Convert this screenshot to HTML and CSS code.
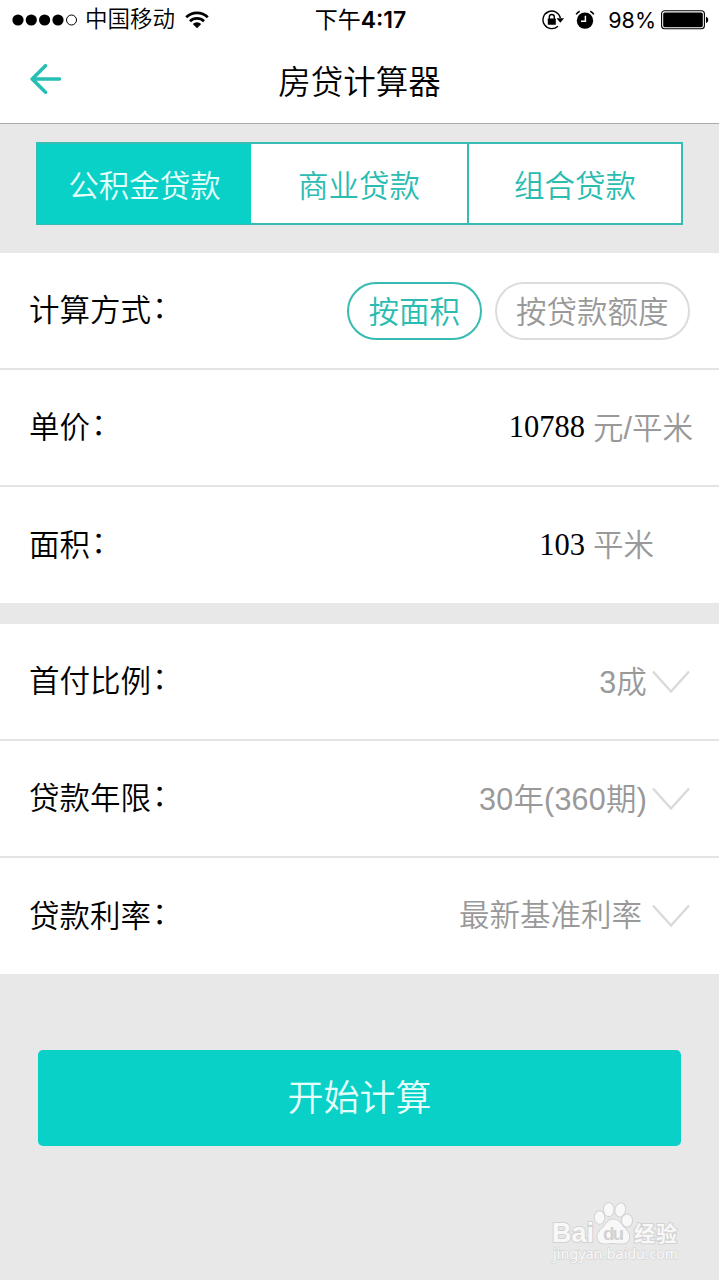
FILE: index.html
```html
<!DOCTYPE html>
<html lang="zh-CN">
<head>
  <meta charset="UTF-8">
  <title>房贷计算器</title>
  <meta name="viewport" content="width=device-width, initial-scale=1.0">
  <link rel="stylesheet" href="styles.css">
</head>
<body>
  <div class="status-bar">
    <div class="status-left">
      <svg class="signal" width="66" height="12" viewBox="0 0 66 12">
        <circle cx="6" cy="6" r="5.6"/>
        <circle cx="19.3" cy="6" r="5.6"/>
        <circle cx="32.6" cy="6" r="5.6"/>
        <circle cx="46" cy="6" r="5.6"/>
        <circle cx="59.5" cy="6" r="5" fill="none" stroke="#000" stroke-width="1"/>
      </svg>
      <span class="carrier">中国移动</span>
      <svg class="wifi" width="24" height="18" viewBox="0 0 24 18">
        <path d="M1.2 6.2a15.4 15.4 0 0 1 21.6 0M5 10.2a10 10 0 0 1 14 0" fill="none" stroke="#000" stroke-width="2.7"/>
        <path d="M7.8 13a6 6 0 0 1 8.4 0L12 17.2z"/>
      </svg>
    </div>
    <div class="status-time">下午<b>4:17</b></div>
    <div class="status-right">
      <svg class="lock" width="24" height="20" viewBox="0 0 24 20">
        <path d="M15.9 16.2A8.8 8.8 0 1 1 18.4 8" fill="none" stroke="#000" stroke-width="1.4"/>
        <path d="M14.5 8.2h7.6l-3.8 4.6z"/>
        <rect x="5.8" y="8.6" width="8" height="6.2" rx=".6"/>
        <path d="M7.3 9V7a2.5 2.5 0 0 1 5 0v2" fill="none" stroke="#000" stroke-width="1.4"/>
      </svg>
      <svg class="alarm" width="20" height="20" viewBox="0 0 20 20">
        <circle cx="10" cy="10.6" r="8.2"/>
        <path d="M1.2 4.4A8 8 0 0 1 4.7 1.3M15.3 1.3a8 8 0 0 1 3.5 3.1" fill="none" stroke="#000" stroke-width="1.6"/>
        <path d="M10.4 5.8v5.4H6" fill="none" stroke="#fff" stroke-width="1.5"/>
      </svg>
      <span class="percent">98%</span>
      <svg class="battery" width="48" height="20" viewBox="0 0 48 20">
        <rect x=".6" y=".8" width="42.8" height="18" rx="3" fill="none" stroke="#000" stroke-width="1.1"/>
        <rect x="2.2" y="2.4" width="39.6" height="14.8" rx="1.6"/>
        <path d="M45 6.8c3 .8 3 5.4 0 6.2z"/>
      </svg>
    </div>
  </div>

  <header class="nav">
    <svg class="back" width="32" height="30" viewBox="0 0 32 30">
      <path d="M15.5 1.8L2.2 15l13.3 13.2M2.5 15H29.5" fill="none" stroke="#27bfb5" stroke-width="3.6" stroke-linecap="round" stroke-linejoin="round"/>
    </svg>
    <h1>房贷计算器</h1>
  </header>

  <div class="tabs">
    <div class="tab active">公积金贷款</div>
    <div class="tab">商业贷款</div>
    <div class="tab">组合贷款</div>
  </div>

  <div class="group">
    <div class="row">
      <label>计算方式<i>：</i></label>
      <span class="pill on">按面积</span>
      <span class="pill">按贷款额度</span>
    </div>
    <div class="row">
      <label>单价<i>：</i></label>
      <span class="number">10788</span>
      <span class="unit">元/平米</span>
    </div>
    <div class="row">
      <label>面积<i>：</i></label>
      <span class="number">103</span>
      <span class="unit">平米</span>
    </div>
  </div>

  <div class="group">
    <div class="row">
      <label>首付比例<i>：</i></label>
      <span class="value">3成</span>
      <svg class="arrow" width="38" height="24" viewBox="0 0 38 24"><path d="M1 1.5L19 21.5 37 1.5"/></svg>
    </div>
    <div class="row">
      <label>贷款年限<i>：</i></label>
      <span class="value">30年(360期)</span>
      <svg class="arrow" width="38" height="24" viewBox="0 0 38 24"><path d="M1 1.5L19 21.5 37 1.5"/></svg>
    </div>
    <div class="row">
      <label>贷款利率<i>：</i></label>
      <span class="value rate">最新基准利率</span>
      <svg class="arrow" width="38" height="24" viewBox="0 0 38 24"><path d="M1 1.5L19 21.5 37 1.5"/></svg>
    </div>
  </div>

  <button class="submit">开始计算</button>

  <svg class="watermark" width="132" height="64" viewBox="0 0 132 64">
    <g class="mark">
      <text x="2" y="41" class="latin" textLength="42">Bai</text>
      <ellipse cx="49.5" cy="16.5" rx="4.8" ry="6.3"/>
      <ellipse cx="58.7" cy="8.5" rx="4.8" ry="6.6"/>
      <ellipse cx="70.3" cy="9" rx="4.8" ry="6.6" transform="rotate(12 70.3 9)"/>
      <ellipse cx="77" cy="19.5" rx="5" ry="6"/>
      <path d="M63 18.5c6 0 8 5 11.500 8.500 3.500 3.500 5.500 6 4.500 10.500-1 4-4 5-8 5-3 0-5-.5-8-.5s-5 .5-8 .5c-5 0-7.500-2.500-7.500-7 0-4 3-6.500 6-9.500 3-3 4.500-7.500 9.500-7.500z"/>
      <text x="84" y="39.5" class="cjk" textLength="43">经验</text>
    </g>
    <text x="53" y="39" class="du" textLength="21">du</text>
    <text x="3" y="58" class="site" textLength="125">jingyan.baidu.com</text>
  </svg>
</body>
</html>
```
FILE: styles.css
```css
:root {
  --primary: #09d1c7;
  --primary-text: #2bbcb1;
  --bg: #e8e8e8;
  --gray: #999;
}

* {
  box-sizing: border-box;
}
body {
  margin: 0;
  height: 1280px;
  overflow: hidden;
  background: var(--bg); color: #000;
  font-family: "Liberation Sans", "Noto Sans CJK SC", sans-serif;
  font-size: 30.5px;
  font-weight: 350;
}
svg {
  display: block;
  flex: none;
}

.status-bar {
  display: grid;
  grid-template-columns: 1fr auto 1fr;
  align-items: center;
  height: 40px;
  padding: 0 10px 1px 12px;
  background: #fff;
  font-size: 22.5px;
  font-weight: 400;
  line-height: 38px;
}
.status-left, .status-right {
  display: flex;
  align-items: center;
}
.status-right {
  justify-content: flex-end;
}
.carrier {
  margin: 0 10px 0 7px;
  padding-top: 1px;
  font-weight: 350;
}
.status-time {
  font-family: Inter, "Noto Sans CJK SC", sans-serif;
  font-size: 23px;
}
.status-time b {
  font-weight: 600;
}
.alarm {
  margin: 0 13px 0 9px;
}
.percent {
  margin-right: 5px;
  font-family: Inter, sans-serif;
  font-size: 21.5px;
}

.nav {
  display: grid;
  grid-template-columns: 32px 1fr 32px;
  align-items: center;
  height: 84px;
  padding: 0 30px 5px;
  background: #fff;
  border-bottom: 1px solid #a9acac;
}
.nav h1 {
  margin: 0;
  font-size: 32.5px;
  font-weight: 350;
  text-align: center;
}

.tabs {
  display: grid;
  grid-template-columns: 213px 216px 1fr;
  height: 83px;
  margin: 18px 36px 28px;
  border: 2px solid #38bbb2;
  background: #fff;
}
.tab {
  padding-top: 5px;
  line-height: 75px;
  text-align: center;
  color: var(--primary-text);
}
.tab:last-child {
  border-left: 2px solid #38bbb2;
}
.tab.active {
  background: var(--primary);
  color: #e6fffd;
}

.group {
  margin-bottom: 21px;
  background: #fff;
}
.row {
  display: flex;
  align-items: center;
  height: 117px;
  padding: 0 29px;
  border-bottom: 2px solid #e4e4e4;
}
.row:last-child {
  height: 116px;
  border-bottom: 0;
}
.row label {
  margin: 0 auto 5px 0;
}
.row i {
  display: inline-block;
  margin-left: 1px;
  font-style: normal;
  line-height: 1;
  vertical-align: 3px;
}
.pill {
  height: 58px;
  padding: 0 19.5px;
  border: 2px solid #dcdcdc;
  border-radius: 29px;
  line-height: 56px;
  color: var(--gray);
}
.pill.on {
  margin-right: 13px;
  border-color: #38bbb2;
  color: var(--primary-text);
}
.number {
  font-family: "Liberation Serif", serif;
}
.unit {
  width: 97px;
  margin: 0 0 4px 8px;
  white-space: nowrap;
  color: var(--gray);
}
.value {
  margin-bottom: 4px;
  letter-spacing: .2px;
  color: var(--gray);
}
.value.rate {
  margin-bottom: 6px;
  letter-spacing: 0;
}
.arrow {
  margin-left: 5px;
}
.rate + .arrow {
  margin-left: 10px;
}
.arrow path {
  fill: none;
  stroke: #dadada;
  stroke-width: 2.4;
}

.submit {
  display: block;
  width: 643px;
  height: 96px;
  margin: 76px auto 0;
  padding: 0 0 7px;
  border: 0;
  border-radius: 5px;
  background: var(--primary);
  color: #e6fffd;
  font: inherit;
  font-size: 36px;
}

.watermark {
  margin: 55px 0 0 550px;
}
.mark {
  fill: #f8f8f8;
  stroke: #d2d2d2;
  stroke-width: 2;
  paint-order: stroke;
}
.latin {
  font: bold 27px "Liberation Sans", sans-serif;
}
.cjk {
  font: bold 21px "Noto Sans CJK SC", sans-serif;
}
.du {
  font: bold 19px "Liberation Sans", sans-serif;
  fill: #d2d2d2;
}
.site {
  font: 14px "Noto Sans", sans-serif;
  fill: #fafafa;
  stroke: #d6d6d6;
  stroke-width: 1.4;
  paint-order: stroke;
}
```
